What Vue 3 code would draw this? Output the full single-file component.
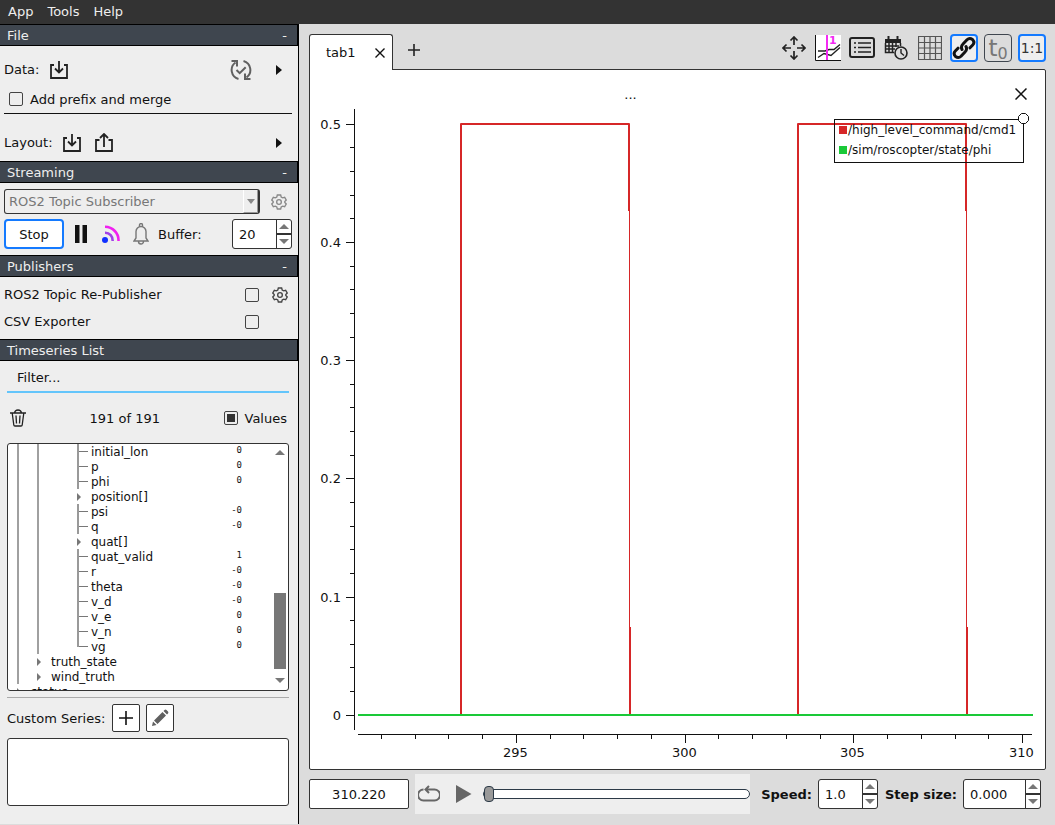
<script setup>
import { computed, onBeforeUnmount, onMounted, ref } from 'vue'

const merge = ref(false)
const republish = ref(false)
const csv = ref(false)
const showValues = ref(true)
const filter = ref('')
const buffer = ref('20')
const time = ref('310.220')
const position = ref(0)
const speed = ref('1.0')
const step = ref('0.000')

// depth: indentation level, guides: levels with a running vertical line
const rows = [
  { name: 'initial_lon', value: '0', depth: 3, guides: [0, 1] },
  { name: 'p', value: '0', depth: 3, guides: [0, 1] },
  { name: 'phi', value: '0', depth: 3, guides: [0, 1] },
  { name: 'position[]', depth: 3, guides: [0, 1], group: true },
  { name: 'psi', value: '-0', depth: 3, guides: [0, 1] },
  { name: 'q', value: '-0', depth: 3, guides: [0, 1] },
  { name: 'quat[]', depth: 3, guides: [0, 1], group: true },
  { name: 'quat_valid', value: '1', depth: 3, guides: [0, 1] },
  { name: 'r', value: '-0', depth: 3, guides: [0, 1] },
  { name: 'theta', value: '-0', depth: 3, guides: [0, 1] },
  { name: 'v_d', value: '-0', depth: 3, guides: [0, 1] },
  { name: 'v_e', value: '0', depth: 3, guides: [0, 1] },
  { name: 'v_n', value: '0', depth: 3, guides: [0, 1] },
  { name: 'vg', value: '0', depth: 3, guides: [0, 1], last: true },
  { name: 'truth_state', depth: 1, guides: [0], group: true },
  { name: 'wind_truth', depth: 1, guides: [0], group: true },
  { name: 'status', depth: 0, guides: [], group: true },
]

const curves = [
  { name: '/high_level_command/cmd1', color: '#d62728' },
  { name: '/sim/roscopter/state/phi', color: '#1ac938' },
]

const plot = ref(null)
const width = ref(735)
const height = ref(699)
let observer

onMounted(() => {
  observer = new ResizeObserver(([entry]) => {
    width.value = Math.round(entry.contentRect.width)
    height.value = Math.round(entry.contentRect.height)
  })
  observer.observe(plot.value)
})
onBeforeUnmount(() => observer.disconnect())

const domain = { x0: 290.31, x1: 310.31, y0: -0.0125, y1: 0.513 }
const area = computed(() => ({
  left: 48,
  right: width.value - 12,
  top: 39,
  bottom: height.value - 39,
}))
const sx = (v) => {
  const a = area.value
  return Math.floor(a.left + ((v - domain.x0) / (domain.x1 - domain.x0)) * (a.right - a.left))
}
const sy = (v) => {
  const a = area.value
  return Math.floor(a.bottom - ((v - domain.y0) / (domain.y1 - domain.y0)) * (a.bottom - a.top))
}

const xTicks = computed(() =>
  Array.from({ length: 20 }, (_, i) => 291 + i).map((v) => ({
    pos: sx(v) + 0.5,
    label: v % 5 === 0 ? String(v) : '',
  })),
)
const yTicks = computed(() =>
  Array.from({ length: 26 }, (_, i) => i).map((i) => ({
    pos: sy(i / 50) + 0.5,
    label: i % 5 === 0 ? String(i / 50) : '',
  })),
)

const pulses = [
  { rise: 293.37, fall: 298.35 },
  { rise: 303.35, fall: 308.34 },
]
const pulsePaths = computed(() =>
  pulses.map((p) => ({
    high: `M${sx(p.rise)} ${sy(0)}V${sy(0.5)}H${sx(p.fall)}V${sy(0.426)}`,
    drop: `M${sx(p.fall) + 0.5} ${sy(0.426)}V${sy(0.074)}`,
    low: `M${sx(p.fall) + 1} ${sy(0.074)}V${sy(0)}`,
  })),
)
</script>

<template>
  <div class="app">
    <nav class="menu">
      <button>App</button>
      <button>Tools</button>
      <button>Help</button>
    </nav>

    <div class="work">
      <aside class="side">
        <h2 class="bar"><span>File</span><button aria-label="Collapse File">-</button></h2>
        <div class="file">
          <div class="line data">
            <span>Data:</span>
            <button class="icon gap-s" aria-label="Load data">
              <svg width="20" height="20" viewBox="0 0 20 20"><path d="M5 5H2v13h16V5h-3M10 1v11M6 8.500l4 4 4-4" fill="none" stroke="#222" stroke-width="1.800" /></svg>
            </button>
            <span class="grow"></span>
            <button class="icon reload" aria-label="Reload data">
              <svg width="22" height="22" viewBox="0 0 22 22"><g fill="none" stroke="#606060" stroke-width="2"><path d="M8.500 20A9.300 9.300 0 0 1 5.500 3.500M1.500 2h5.500v5.500M13.500 2A9.300 9.300 0 0 1 16.500 18.500M20.500 20H15v-5.500" /><path d="M6.500 11l3.200 3.200 6-6" /></g></svg>
            </button>
            <button class="icon tri" aria-label="Recent data">
              <svg width="6" height="10" viewBox="0 0 6 10"><path d="M0 0l6 5-6 5z" fill="#111" /></svg>
            </button>
          </div>
          <label class="check-line"><input v-model="merge" type="checkbox" /><span class="low">Add prefix and merge</span></label>
          <hr />
          <div class="line">
            <span>Layout:</span>
            <button class="icon gap-l" aria-label="Load layout">
              <svg width="20" height="20" viewBox="0 0 20 20"><path d="M5 5H2v13h16V5h-3M10 1v11M6 8.500l4 4 4-4" fill="none" stroke="#222" stroke-width="1.800" /></svg>
            </button>
            <button class="icon gap-m" aria-label="Save layout">
              <svg width="20" height="20" viewBox="0 0 20 20"><path d="M5.500 7H2v11h16V7h-3.500M10 14V1M6 5l4-4 4 4" fill="none" stroke="#222" stroke-width="1.800" /></svg>
            </button>
            <span class="grow"></span>
            <button class="icon tri" aria-label="Recent layouts">
              <svg width="6" height="10" viewBox="0 0 6 10"><path d="M0 0l6 5-6 5z" fill="#111" /></svg>
            </button>
          </div>
        </div>

        <h2 class="bar"><span>Streaming</span><button aria-label="Collapse Streaming">-</button></h2>
        <div class="streaming">
          <div class="source">
            <div class="combo">
              <select aria-label="Streaming source" disabled>
                <option>ROS2 Topic Subscriber</option>
              </select>
              <span class="drop"><svg width="8" height="5" viewBox="0 0 8 5"><path d="M0 0h8L4 5z" fill="#888" /></svg></span>
            </div>
            <button class="icon" aria-label="Streaming options">
              <svg width="16" height="16" viewBox="0 0 24 24" class="gear dim"><path d="M9.500 1.500h5l.8 3 2.200 1.300 3-.9 2.400 4.200-2.200 2.200v1.400l2.200 2.200-2.400 4.200-3-.9-2.200 1.300-.8 3h-5l-.8-3-2.200-1.300-3 .9-2.400-4.200 2.200-2.200v-1.400L1.100 9.100l2.400-4.200 3 .9 2.200-1.300z" /><circle cx="12" cy="12" r="3.500" /></svg>
            </button>
          </div>
          <div class="controls">
            <button class="stop">Stop</button>
            <button class="icon pause" aria-label="Pause">
              <svg width="12" height="18" viewBox="0 0 12 18"><path d="M0 0h4.500v18H0zM7.500 0H12v18H7.500z" fill="#111" /></svg>
            </button>
            <button class="icon feed" aria-label="Live stream">
              <svg width="18" height="18" viewBox="0 0 18 18"><path d="M3 1.800A13.500 13.500 0 0 1 16.500 16" fill="none" stroke="#f020f0" stroke-width="2.600" /><path d="M3 7.800A7.500 7.500 0 0 1 10.700 16" fill="none" stroke="#a040e8" stroke-width="2.600" /><circle cx="3" cy="15" r="3" fill="#1030ff" /></svg>
            </button>
            <button class="icon bell" aria-label="Notifications">
              <svg width="16" height="22" viewBox="0 0 16 22"><path d="M1 18h14l-2-3V8.500a5 5 0 0 0-10 0V15zM6.500 3.500V2a1.500 1.500 0 0 1 3 0v1.500M5.500 18.500a2.500 2.500 0 0 0 5 0" fill="none" stroke="#777" stroke-width="1.400" /></svg>
            </button>
            <label class="low" for="buffer">Buffer:</label>
            <span class="grow"></span>
            <div class="spin spin-s">
              <input id="buffer" v-model="buffer" type="text" />
              <button aria-label="Increase buffer"><i class="up"></i></button>
              <button aria-label="Decrease buffer"><i class="down"></i></button>
            </div>
          </div>
        </div>

        <h2 class="bar"><span>Publishers</span><button aria-label="Collapse Publishers">-</button></h2>
        <div class="publishers">
          <div class="pub">
            <label for="republish">ROS2 Topic Re-Publisher</label>
            <input id="republish" v-model="republish" type="checkbox" />
            <button class="icon" aria-label="Re-Publisher options">
              <svg width="16" height="16" viewBox="0 0 24 24" class="gear"><path d="M9.500 1.500h5l.8 3 2.200 1.300 3-.9 2.400 4.200-2.200 2.200v1.400l2.200 2.200-2.400 4.200-3-.9-2.200 1.300-.8 3h-5l-.8-3-2.200-1.300-3 .9-2.400-4.200 2.200-2.200v-1.400L1.100 9.100l2.400-4.200 3 .9 2.200-1.300z" /><circle cx="12" cy="12" r="3.500" /></svg>
            </button>
          </div>
          <div class="pub">
            <label for="csv">CSV Exporter</label>
            <input id="csv" v-model="csv" type="checkbox" />
          </div>
        </div>

        <h2 class="bar"><span>Timeseries List</span></h2>
        <div class="series">
          <input v-model="filter" class="filter" type="text" placeholder="Filter..." aria-label="Filter" />
          <div class="count">
            <button class="icon" aria-label="Delete series">
              <svg width="16" height="18" viewBox="0 0 16 18"><g fill="none" stroke="#222" stroke-width="1.300"><path d="M0 4h16M2.200 4l1.600 12q.1 1 1.200 1h6q1.100 0 1.200-1l1.600-12M4.500 4q.5-3 3.500-3t3.500 3" /><path d="M6 6.500l.5 8M10 6.500l-.5 8" /></g></svg>
            </button>
            <span class="low">191 of 191</span>
            <label><input v-model="showValues" type="checkbox" /><span class="low">Values</span></label>
          </div>

          <div class="tree">
            <ul>
              <li v-for="row in rows" :key="row.name">
                <span v-for="n in row.depth" :key="n" class="cell" :class="{ guide: row.guides.includes(n - 1) }"></span>
                <span class="cell node" :class="row.group ? 'group' : row.last ? 'leaf last' : 'leaf'"></span>
                <span class="name">{{ row.name }}</span>
                <span class="value">{{ row.value }}</span>
              </li>
            </ul>
            <div class="scroll"><i class="up"></i><span class="thumb"></span><i class="down"></i></div>
          </div>

          <hr class="soft" />
          <div class="custom">
            <span class="low">Custom Series:</span>
            <button class="box" aria-label="Add custom series">
              <svg width="14" height="14" viewBox="0 0 14 14"><path d="M7 0v14M0 7h14" stroke="#111" stroke-width="1.600" /></svg>
            </button>
            <button class="box" aria-label="Edit custom series">
              <svg width="18" height="18" viewBox="0 0 18 18"><path d="M1 17l1-4.500L5.500 16zM3 11.500l8.500-8.500 3.500 3.500L6.500 15zM12.500 2l1-1q1-.8 2 0l1.500 1.500q.8 1 0 2l-1 1z" fill="#606060" /></svg>
            </button>
          </div>
          <div class="list"></div>
        </div>
      </aside>

      <main class="main">
        <div class="top">
          <div class="tab"><span>tab1</span>
            <button class="icon" aria-label="Close tab">
              <svg width="10" height="10" viewBox="0 0 10 10"><path d="M.5.500l9 9M9.500.500l-9 9" stroke="#111" stroke-width="1.400" /></svg>
            </button>
          </div>
          <button class="icon add" aria-label="New tab">
            <svg width="12" height="12" viewBox="0 0 12 12"><path d="M6 0v12M0 6h12" stroke="#222" stroke-width="1.600" /></svg>
          </button>
          <div class="tools">
            <button aria-label="Move">
              <svg width="24" height="24" viewBox="0 0 24 24"><path d="M12 1v8M12 15v8M1 12h8M15 12h8M8.500 4.500L12 1l3.500 3.500M8.500 19.500L12 23l3.500-3.500M4.500 8.500L1 12l3.500 3.500M19.500 8.500L23 12l-3.500 3.500" fill="none" stroke="#222" stroke-width="1.700" /></svg>
            </button>
            <button aria-label="Tracker values">
              <svg width="26" height="26" viewBox="0 0 26 26"><path d="M0 0h26v26H0z" fill="#fff" /><path d="M.5 0v25.500H26" fill="none" stroke="#111" /><path d="M3 16h7l4-1.500h5l6-5M3 22.500l6-4 7 2 9-8" fill="none" stroke="#222" stroke-width="1.400" /><path d="M12 0v25" stroke="#f32af3" stroke-width="2" /><text x="14" y="9" font-size="11" font-weight="bold" fill="#f32af3">1</text></svg>
            </button>
            <button aria-label="Legend">
              <svg width="26" height="22" viewBox="0 0 26 22"><rect x="1" y="1" width="24" height="19" rx="2" fill="none" stroke="#222" stroke-width="2" /><path d="M5 6h2M9 6h13M5 10.500h2M9 10.500h13M5 15h2M9 15h13" stroke="#222" stroke-width="1.700" /></svg>
            </button>
            <button aria-label="Date and time">
              <svg width="24" height="24" viewBox="0 0 24 24"><path d="M1 3h16v4H1zM3.500 0h2v3h-2zM12.500 0h2v3h-2z" fill="#222" /><path d="M1.500 7v9.500H10M16.500 7v3M2 10h13M2 13h9M5 7v9.500M8.500 7v9.500M12 7v4" fill="none" stroke="#222" stroke-width="1.500" /><circle cx="17" cy="17" r="6" fill="#ddd" stroke="#222" stroke-width="1.600" /><path d="M17 13v4l3 2.500" fill="none" stroke="#222" stroke-width="1.400" /></svg>
            </button>
            <button aria-label="Grid">
              <svg width="24" height="24" viewBox="0 0 24 24"><path d="M.5.500h23v23H.5zM6.500 0v24M12 0v24M17.500 0v24M0 6.500h24M0 12h24M0 17.500h24" fill="none" stroke="#555" stroke-width="1.200" /></svg>
            </button>
            <button class="on" aria-label="Link axes">
              <svg width="24" height="24" viewBox="0 0 24 24"><g fill="none" stroke="#111" stroke-width="3" stroke-linecap="round"><path d="M10 13.500Q8.500 10.500 11 8L15 3.800Q17.500 1.300 20.500 3.500Q23.200 6.500 20.700 9L18 11.800" /><path d="M14 10.500Q15.500 13.500 13 16L9 20.200Q6.500 22.700 3.500 20.500Q.8 17.500 3.300 15L6 12.200" /></g></svg>
            </button>
            <button class="off" aria-label="Remove time offset"><span class="t0">t<sub>0</sub></span></button>
            <button class="on ratio">1:1</button>
          </div>
        </div>

        <section class="panel">
          <div ref="plot" class="plot">
            <svg :width="width" :height="height">
              <g stroke="#111" shape-rendering="crispEdges">
                <path :d="`M44.500 ${area.top}V${area.bottom}M${area.left} ${height - 34.5}H${area.right - 1}`" fill="none" />
                <line v-for="t in yTicks" :key="'y' + t.pos" :x1="t.label ? 36 : 40" x2="44" :y1="t.pos" :y2="t.pos" />
                <line v-for="t in xTicks" :key="'x' + t.pos" :x1="t.pos" :x2="t.pos" :y1="height - 34" :y2="height - (t.label ? 26 : 30)" />
              </g>
              <g class="ticks">
                <template v-for="t in yTicks" :key="'yl' + t.pos">
                  <text v-if="t.label" x="31" :y="t.pos + 4.5" text-anchor="end">{{ t.label }}</text>
                </template>
                <template v-for="t in xTicks" :key="'xl' + t.pos">
                  <text v-if="t.label" :x="t.pos - 1" :y="height - 12" text-anchor="middle">{{ t.label }}</text>
                </template>
              </g>
              <g v-for="p in pulsePaths" :key="p.high" fill="none" :stroke="curves[0].color" stroke-width="2" stroke-linejoin="round">
                <path :d="p.high" />
                <path :d="p.drop" stroke-width="1" />
                <path :d="p.low" />
              </g>
              <path :d="`M${area.left} ${sy(0)}H${area.right}`" :stroke="curves[1].color" stroke-width="2" />
            </svg>
          </div>
          <div class="title">...</div>
          <button class="icon close" aria-label="Close plot">
            <svg width="12" height="12" viewBox="0 0 12 12"><path d="M.5.500l11 11M11.500.500l-11 11" stroke="#111" stroke-width="1.500" /></svg>
          </button>
          <div class="legend">
            <div v-for="c in curves" :key="c.name">
              <svg width="8" height="8"><rect width="8" height="8" :fill="c.color" /></svg>{{ c.name }}
            </div>
            <svg class="knob" width="11" height="11" viewBox="0 0 11 11"><path d="M3.500.500h4l3 3v4l-3 3h-4l-3-3v-4z" fill="#fff" stroke="#111" /></svg>
          </div>
        </section>

        <div class="play">
          <input v-model="time" class="time" type="text" aria-label="Current time" />
          <div class="player">
            <button class="icon" aria-label="Loop">
              <svg width="22" height="18" viewBox="0 0 22 18"><path d="M5.500 4.500a5.300 5.300 0 0 0 0 11h11a5.300 5.300 0 0 0 0-11H8M11 1L7.500 4.500 11 8" fill="none" stroke="#666" stroke-width="2" /></svg>
            </button>
            <button class="icon" aria-label="Play">
              <svg width="16" height="18" viewBox="0 0 16 18"><path d="M0 0l15.500 9L0 18z" fill="#666" /></svg>
            </button>
            <input v-model="position" type="range" min="0" max="100" aria-label="Position" />
          </div>
          <label class="strong low" for="speed">Speed:</label>
          <div class="spin spin-s">
            <input id="speed" v-model="speed" type="text" />
            <button aria-label="Increase speed"><i class="up"></i></button>
            <button aria-label="Decrease speed"><i class="down"></i></button>
          </div>
          <label class="strong step low" for="step">Step size:</label>
          <div class="spin spin-l">
            <input id="step" v-model="step" type="text" />
            <button aria-label="Increase step"><i class="up"></i></button>
            <button aria-label="Decrease step"><i class="down"></i></button>
          </div>
        </div>
      </main>
    </div>
  </div>
</template>

<style>
body {
  background: #dcdcdc;
}
</style>

<style scoped>
* {
  box-sizing: border-box;
}
.app {
  display: flex;
  flex-direction: column;
  height: 100vh;
  font: 13px/16px "DejaVu Sans", sans-serif;
  color: #111;
}
button,
input,
select {
  font: inherit;
  color: inherit;
  margin: 0;
  padding: 0;
}
button {
  border: 0;
  background: none;
}
svg {
  display: block;
}
.icon {
  display: grid;
  place-items: center;
  flex: none;
}
.grow {
  flex: 1;
}
.low {
  padding-top: 2px;
}
.menu {
  display: flex;
  flex: none;
  gap: 14px;
  height: 24px;
  padding-left: 8px;
  background: #333;
  color: #eee;
}
.work {
  flex: 1;
  display: flex;
  min-height: 0;
}
.side {
  flex: none;
  width: 299px;
  display: flex;
  flex-direction: column;
  background: #eee;
  border-right: 1px solid #000;
  margin-bottom: 1px;
}
.bar {
  display: flex;
  justify-content: space-between;
  align-items: center;
  flex: none;
  height: 22px;
  margin: 0;
  padding: 2px 10px 0 7px;
  border: 1px solid #000;
  border-left: 0;
  background: #3f464f;
  color: #eee;
  font: inherit;
}
.file {
  padding: 7px 6px 2px 4px;
}
.line {
  display: flex;
  align-items: center;
  height: 32px;
}
.data {
  padding-top: 1px;
}
.gap-s {
  margin-left: 10px;
}
.gap-l {
  margin-left: 9px;
}
.gap-m {
  margin-left: 12px;
}
.reload {
  margin-right: 24px;
}
.tri {
  margin-right: 10px;
}
.check-line {
  display: flex;
  align-items: center;
  gap: 7px;
  height: 28px;
  padding-left: 5px;
}
hr {
  height: 1px;
  margin: 0 0 13px;
  border: 0;
  background: #111;
}
input[type="checkbox"] {
  appearance: none;
  flex: none;
  display: grid;
  place-items: center;
  width: 14px;
  height: 14px;
  border: 1px solid #444;
  border-radius: 2px;
}
input[type="checkbox"]:checked::after {
  content: "";
  width: 8px;
  height: 8px;
  background: #333;
}
.streaming {
  display: grid;
  gap: 5px;
  padding: 6px 6px 6px 4px;
}
.source {
  display: flex;
  justify-content: space-between;
  align-items: center;
  padding-right: 5px;
}
.combo {
  display: grid;
  width: 256px;
  height: 25px;
  border: 1px solid #333;
  border-right-width: 2px;
  border-radius: 3px;
}
.combo > * {
  grid-area: 1 / 1;
}
.combo select {
  appearance: none;
  border: 0;
  padding: 1px 0 0 4px;
  background: none;
  color: #777;
  opacity: 1;
}
.drop {
  justify-self: end;
  display: grid;
  place-items: center;
  width: 15px;
  border-left: 1px solid #fff;
  border-right: 1px solid #999;
  border-bottom: 1px solid #999;
}
.gear {
  fill: none;
  stroke: #444;
  stroke-width: 2;
}
.gear.dim {
  stroke: #888;
}
.controls {
  display: flex;
  align-items: center;
}
.stop {
  width: 60px;
  height: 30px;
  padding-top: 2px;
  border: 2px solid #147aff;
  border-radius: 4px;
  background: #fff;
}
.pause {
  margin-left: 11px;
}
.feed {
  margin-left: 15px;
}
.bell {
  margin: 0 9px 0 13px;
}
.spin {
  display: grid;
  grid-template: 1fr 1fr / 1fr 14px;
  column-gap: 1px;
  row-gap: 2px;
  height: 30px;
  border: 1px solid #333;
  border-radius: 3px;
  background: #333;
  overflow: hidden;
}
.spin input {
  grid-row: 1 / 3;
  min-width: 0;
  width: 100%;
  border: 0;
  padding: 2px 0 0 6px;
  background: #fff;
}
.spin button {
  display: grid;
  place-items: center;
  background: #fff;
}
.spin-s {
  width: 60px;
}
.spin-l {
  width: 78px;
}
.up,
.down {
  border: 5px solid transparent;
}
.up {
  border-top: 0;
  border-bottom-color: #777;
}
.down {
  border-bottom: 0;
  border-top-color: #777;
}
.publishers {
  padding: 4px 10px 4px 4px;
}
.pub {
  display: grid;
  grid-template-columns: 1fr 14px 16px;
  column-gap: 13px;
  align-items: center;
  height: 27px;
}
.series {
  flex: 1;
  display: flex;
  flex-direction: column;
  min-height: 0;
  padding: 0 9px 18px 7px;
}
.filter {
  flex: none;
  height: 32px;
  border: 0;
  border-bottom: 2px solid #63c5fb;
  padding: 2px 0 0 10px;
  background: none;
}
.filter::placeholder {
  color: #111;
}
.count {
  display: flex;
  align-items: center;
  justify-content: space-between;
  flex: none;
  height: 50px;
  padding: 0 2px 0 3px;
}
.count label {
  display: flex;
  align-items: center;
  gap: 7px;
}
.tree {
  flex: 1;
  display: flex;
  min-height: 0;
  border: 1px solid #333;
  border-radius: 3px;
  background: #fff;
  overflow: hidden;
}
ul {
  flex: 1;
  margin: 0;
  padding: 0 0 0 9px;
  list-style: none;
  font-size: 12px;
  line-height: 17px;
}
li {
  display: flex;
  height: 15px;
}
.cell {
  flex: none;
  width: 20px;
}
.node {
  width: 14px;
}
.guide {
  border-left: 2px solid #a0a0a0;
}
.leaf {
  background:
    linear-gradient(#777, #777) 2px 7px / 9px 1px no-repeat,
    linear-gradient(#999, #999) 0 0 / 2px 100% no-repeat;
}
.leaf.last {
  background:
    linear-gradient(#777, #777) 2px 7px / 9px 1px no-repeat,
    linear-gradient(#999, #999) 0 0 / 2px 8px no-repeat;
}
.group::before {
  content: "";
  display: block;
  margin-top: 4px;
  width: 0;
  border: 4px solid transparent;
  border-left-color: #777;
  border-right: 0;
}
.name {
  flex: 1;
}
.value {
  font: 9px/13px "DejaVu Sans Mono", monospace;
}
.scroll {
  display: flex;
  flex-direction: column;
  align-items: center;
  width: 12px;
  margin: 6px 2px 7px 32px;
}
.thumb {
  flex: none;
  width: 12px;
  height: 76px;
  margin: auto 0 9px;
  background: #777;
}
.soft {
  flex: none;
  margin: 6px 0;
  background: #aaa;
}
.custom {
  display: flex;
  align-items: center;
  gap: 6px;
}
.custom span {
  margin-right: 1px;
}
.box {
  display: grid;
  place-items: center;
  width: 28px;
  height: 28px;
  border: 1px solid #333;
  border-radius: 2px;
  background: #fff;
}
.list {
  flex: none;
  height: 68px;
  margin-top: 6px;
  border: 1px solid #333;
  border-radius: 3px;
  background: #fff;
}
.main {
  flex: 1;
  display: flex;
  flex-direction: column;
  min-width: 0;
  padding: 10px 9px 11px 10px;
}
.top {
  display: flex;
  flex: none;
  height: 35px;
}
.tab {
  z-index: 1;
  display: flex;
  align-items: center;
  justify-content: space-between;
  width: 84px;
  height: 36px;
  padding: 0 7px 0 16px;
  border: 1px solid #333;
  border-bottom: 0;
  border-radius: 3px 3px 0 0;
  background: #fff;
}
.add {
  width: 42px;
  height: 32px;
}
.tools {
  display: flex;
  gap: 6px;
  margin-left: auto;
}
.tools button {
  display: grid;
  place-items: center;
  width: 28px;
  height: 28px;
}
.tools .on {
  border: 2px solid #147aff;
  border-radius: 4px;
  background: #eee;
}
.tools .off {
  border: 1px solid #3f464f;
  border-radius: 4px;
}
.t0 {
  color: #777;
  font-size: 23px;
  line-height: 24px;
}
.t0 sub {
  font-size: 16px;
  line-height: 0;
  vertical-align: -3px;
}
.tools .ratio {
  font-size: 14px;
  color: #333;
}
.panel {
  position: relative;
  flex: 1;
  display: flex;
  min-height: 0;
  border: 1px solid #333;
  border-radius: 0 2px 2px 2px;
  background: #fff;
}
.plot {
  flex: 1;
  min-width: 0;
  overflow: hidden;
}
.ticks {
  font-size: 13px;
  fill: #111;
}
.title {
  position: absolute;
  top: 17px;
  left: 0;
  right: 94px;
  text-align: center;
}
.close {
  position: absolute;
  top: 18px;
  right: 18px;
}
.legend {
  position: absolute;
  top: 49px;
  right: 21px;
  width: 190px;
  padding: 0 3px 2px 4px;
  border: 1px solid #111;
  font-size: 12px;
  line-height: 20px;
}
.legend div {
  display: flex;
  align-items: center;
  gap: 1px;
  white-space: nowrap;
}
.knob {
  position: absolute;
  top: -7px;
  right: -6px;
}
.play {
  display: flex;
  align-items: center;
  flex: none;
  height: 40px;
  margin-top: 4px;
  padding-right: 5px;
}
.time {
  width: 100px;
  height: 30px;
  padding-top: 1px;
  border: 1px solid #333;
  border-radius: 2px;
  background: #fff;
  text-align: center;
}
.player {
  flex: 1;
  display: flex;
  align-items: center;
  gap: 16px;
  height: 40px;
  margin: 0 11px 0 6px;
  padding-left: 3px;
  background: #eee;
}
.player input {
  appearance: none;
  flex: 1;
  min-width: 0;
  height: 10px;
  margin-left: -5px;
  border: 1px solid #2c3a47;
  border-radius: 5px;
  background: #fff;
}
.player input::-webkit-slider-thumb {
  appearance: none;
  width: 10px;
  height: 16px;
  border: 1px solid #2c3a47;
  border-radius: 4px;
  background: #999;
}
.strong {
  font-weight: bold;
  margin-right: 6px;
}
.step {
  margin-left: 7px;
}
</style>
